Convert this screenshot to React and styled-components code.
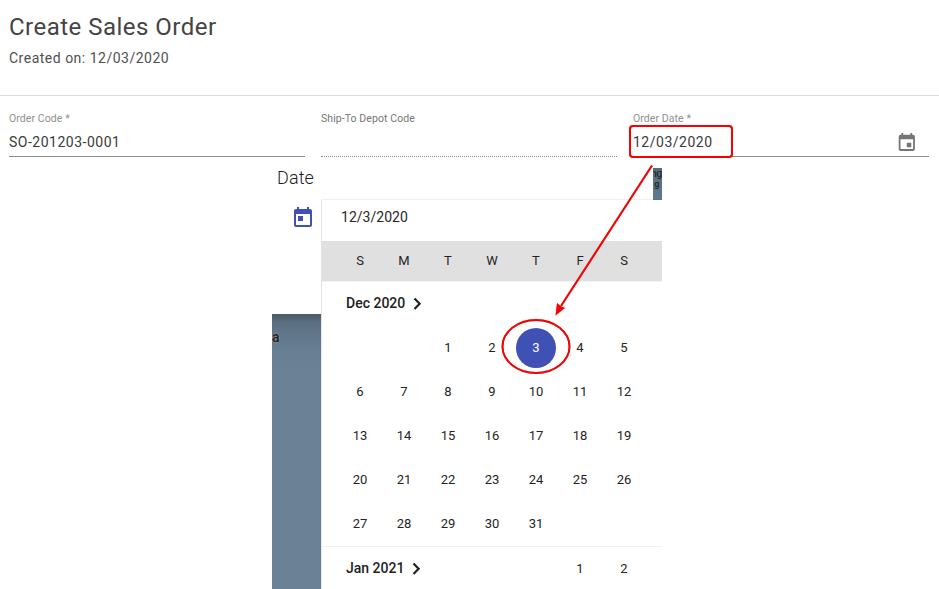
import React from 'react';
import styled, { createGlobalStyle } from 'styled-components';

const GlobalStyle = createGlobalStyle`
  * { box-sizing: border-box; }
  body {
    margin: 0;
    overflow: hidden;
    background: #fff;
    font-family: Roboto, sans-serif;
    color: #212121;
  }
`;

const Page = styled.div`
  position: relative;
  height: 589px;
  overflow: hidden;
  background: #fff;
`;

const Header = styled.header`
  height: 96px;
  padding: 11px 9px 0;
  border-bottom: 1px solid #dcdcdc;
`;

const Title = styled.h1`
  margin: 0;
  font-size: 24px;
  font-weight: 400;
  line-height: 32px;
  letter-spacing: 0.48px;
  color: #444;
`;

const Subtitle = styled.p`
  margin: 5px 0 0;
  font-size: 14px;
  line-height: 20px;
  letter-spacing: 0.5px;
  color: #505050;
`;

const Form = styled.form`
  display: grid;
  grid-template-columns: repeat(3, 296px);
  gap: 16px;
  height: 71px;
  padding-left: 9px;
`;

const Field = styled.div`
  display: flex;
  flex-direction: column;
  height: 61px;
  padding-top: 16px;
  border-bottom: 1px ${(p) => (p.$disabled ? 'dotted' : 'solid')} #8c8c8c;
`;

const Label = styled.label`
  font-size: 10.5px;
  line-height: 14px;
  letter-spacing: 0.08px;
  color: ${(p) => (p.$strong ? '#777' : '#8f8f8f')};
`;

const ValueRow = styled.div`
  display: flex;
  justify-content: space-between;
  padding: 6px 11px 0 0;
`;

const Value = styled.span`
  font-size: 14px;
  line-height: 20px;
  letter-spacing: 0.5px;
  color: #3a3a3a;
`;

const Picker = styled.section`
  display: grid;
  grid-template-columns: 49px 341px;
  width: 390px;
  height: 422px;
  margin-left: 272px;
`;

const Side = styled.div`
  display: flex;
  flex-direction: column;
`;

const DateLabel = styled.div`
  height: 39px;
  padding-left: 5px;
  font-size: 18px;
  font-weight: 300;
  line-height: 22px;
  letter-spacing: 0.1px;
  white-space: nowrap;
  color: #1c1c1c;
`;

const SideIcon = styled.div`
  height: 108px;
  padding-left: 19px;
`;

const Backdrop = styled.div`
  flex: 1;
  padding-top: 15px;
  overflow: hidden;
  background: linear-gradient(#4a5b69 0, #5c7082 9px, #687f93 36px, #6b8195 60px);
  font-size: 14px;
  font-weight: 700;
  line-height: 17px;
  color: #272727;
  text-shadow: 0 0 2px #aaa;
`;

const Main = styled.div`
  display: flex;
  flex-direction: column;
`;

const TopStrip = styled.div`
  display: flex;
  justify-content: flex-end;
  height: 33px;
  padding-top: 1px;
`;

const Sliver = styled.div`
  display: flex;
  flex-direction: column;
  align-items: flex-end;
  width: 9px;
  height: 32px;
  overflow: hidden;
  background: linear-gradient(#586b7a, #607a90);
  font-size: 11px;
  font-weight: 500;
  line-height: 12px;
  letter-spacing: -0.5px;
  color: #292d30;
`;

const SliverSmall = styled.span`
  margin-top: -1px;
  padding-right: 3px;
  font-size: 9px;
  font-weight: 700;
  line-height: 10px;
`;

const Calendar = styled.div`
  flex: 1;
  border-left: 1px solid #e5e5e5;
  background: #fff;
  box-shadow: 0 -1px 1px rgba(0, 0, 0, 0.06);
  clip-path: inset(-2px 0 0 -2px);
`;

const DateInput = styled.div`
  height: 41px;
  padding: 7px 0 0 19px;
  font-size: 14px;
  line-height: 20px;
  letter-spacing: 0.02px;
  color: #262626;
`;

const Week = styled.div`
  display: grid;
  grid-template-columns: repeat(7, 44px);
  align-items: center;
  justify-items: center;
  height: 44px;
  padding-left: 16px;
  font-size: 13px;
  line-height: 16px;
  color: #242424;
`;

const WeekHeader = styled(Week)`
  height: 41px;
  background: #e0e0e0;
  border-bottom: 1px solid #f2f2f2;
`;

const MonthTitle = styled.div`
  display: flex;
  align-items: center;
  gap: 8px;
  height: 44px;
  padding: 0 0 2px 24px;
  font-size: 14px;
  font-weight: 500;
  color: #212121;
`;

const NextMonth = styled(Week)`
  border-top: 1px solid #f0f0f0;
`;

const NextTitle = styled(MonthTitle)`
  grid-column: 1 / 6;
  justify-self: start;
  padding-left: 8px;
`;

const Day = styled.span`
  display: flex;
  align-items: center;
  justify-content: center;
  width: 40px;
  height: 40px;
  border-radius: 50%;
  background: ${(p) => (p.$selected ? '#3f51b5' : 'transparent')};
  color: ${(p) => (p.$selected ? '#fff' : 'inherit')};
`;

const Annotation = styled.svg`
  position: absolute;
  inset: 0;
  pointer-events: none;
  filter: drop-shadow(0.5px 0.8px 0.4px rgba(0, 0, 0, 0.35));
`;

const Icon = styled.svg`
  display: block;
  flex: none;
  fill: ${(p) => p.$color};
`;

const Chevron = () => (
  <svg width="9" height="13" viewBox="0 0 9 13" fill="none" stroke="#212121" strokeWidth="2.2">
    <path d="M1.5 1.5 L6.6 6.8 L1.5 12" />
  </svg>
);

const weeks = [
  ['', '', 1, 2, 3, 4, 5],
  [6, 7, 8, 9, 10, 11, 12],
  [13, 14, 15, 16, 17, 18, 19],
  [20, 21, 22, 23, 24, 25, 26],
  [27, 28, 29, 30, 31, '', ''],
];

export default function App() {
  return (
    <>
      <GlobalStyle />
      <Page>
        <Header>
          <Title>Create Sales Order</Title>
          <Subtitle>Created on: 12/03/2020</Subtitle>
        </Header>
        <Form>
          <Field>
            <Label>Order Code *</Label>
            <ValueRow>
              <Value>SO-201203-0001</Value>
            </ValueRow>
          </Field>
          <Field $disabled>
            <Label $strong>Ship-To Depot Code</Label>
          </Field>
          <Field>
            <Label>Order Date *</Label>
            <ValueRow>
              <Value>12/03/2020</Value>
              <Icon width="21.6" height="21.6" viewBox="0 0 24 24" $color="#757575">
                <path d="M17 12h-5v5h5v-5zM16 1v2H8V1H6v2H5c-1.11 0-1.99.9-1.99 2L3 19c0 1.1.89 2 2 2h14c1.1 0 2-.9 2-2V5c0-1.1-.9-2-2-2h-1V1h-2zm3 18H5V8h14v11z" />
              </Icon>
            </ValueRow>
          </Field>
        </Form>
        <Picker>
          <Side>
            <DateLabel>Date</DateLabel>
            <SideIcon>
              <Icon width="24" height="24" viewBox="0 0 24 24" $color="#3f51b5">
                <path d="M19 3h-1V1h-2v2H8V1H6v2H5c-1.11 0-1.99.9-1.99 2L3 19c0 1.1.89 2 2 2h14c1.1 0 2-.9 2-2V5c0-1.1-.9-2-2-2zm0 16H5V8h14v11zM7 10h5v5H7z" />
              </Icon>
            </SideIcon>
            <Backdrop>a</Backdrop>
          </Side>
          <Main>
            <TopStrip>
              <Sliver>
                ng
                <SliverSmall>g</SliverSmall>
              </Sliver>
            </TopStrip>
            <Calendar>
              <DateInput>12/3/2020</DateInput>
              <WeekHeader>
                {['S', 'M', 'T', 'W', 'T', 'F', 'S'].map((d, i) => (
                  <span key={i}>{d}</span>
                ))}
              </WeekHeader>
              <MonthTitle>
                Dec 2020
                <Chevron />
              </MonthTitle>
              {weeks.map((week, w) => (
                <Week key={w}>
                  {week.map((day, i) => (
                    <Day key={i} $selected={day === 3}>{day}</Day>
                  ))}
                </Week>
              ))}
              <NextMonth>
                <NextTitle>
                  Jan 2021
                  <Chevron />
                </NextTitle>
                <Day>1</Day>
                <Day>2</Day>
              </NextMonth>
            </Calendar>
          </Main>
        </Picker>
        <Annotation width="939" height="589" fill="none" stroke="#fa0000" strokeWidth="2">
          <rect x="630" y="126" width="102" height="31" rx="3" />
          <path d="M652 165.500 L561 306" />
          <path d="M555.500 315.500 L557 303 L560.500 306 L565 308 Z" fill="#fa0000" stroke="none" />
          <ellipse cx="536" cy="346.500" rx="33.500" ry="26.500" />
        </Annotation>
      </Page>
    </>
  );
}
